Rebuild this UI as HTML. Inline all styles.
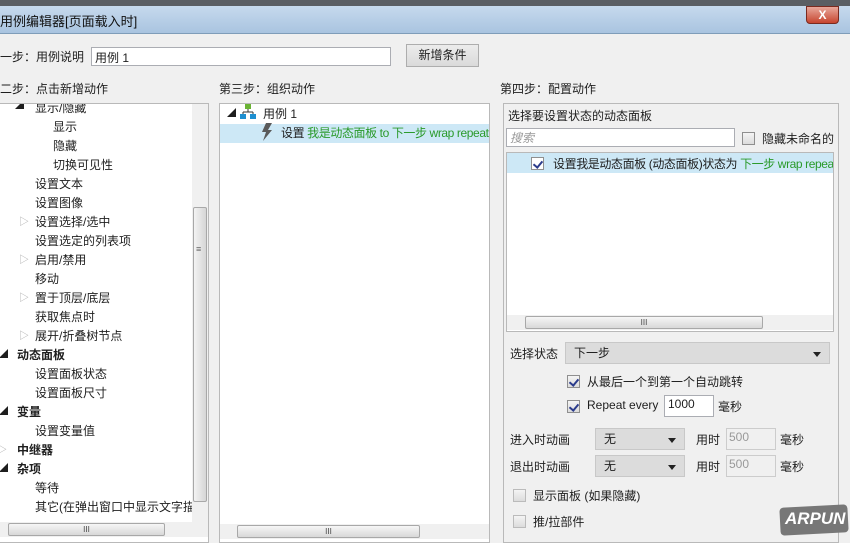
<!DOCTYPE html>
<html><head><meta charset="utf-8"><style>
*{box-sizing:border-box;margin:0;padding:0}
body{width:850px;height:537px;overflow:hidden;background:#f0f0f0;font-family:"Liberation Sans","Noto Sans CJK SC",sans-serif;font-size:12px;color:#1e1e1e;position:relative}
.a{position:absolute;white-space:nowrap}
.panel{position:absolute;background:#fff;border:1px solid #b9b9b9}
.panel .a{margin-top:-2px}
.g{color:#2a9a2a}
.n{letter-spacing:-0.4px}
.cb{position:absolute;width:13px;height:13px;border:1px solid #8f8f8f;background:linear-gradient(#f4f4f4,#dcdcdc)}
.ck::after{content:"";position:absolute;left:3px;top:1px;width:4px;height:7px;border:solid #2b3c8c;border-width:0 2px 2px 0;transform:rotate(40deg)}
.sel{position:absolute;background:#dcdcdc;border:1px solid #c8c8c8}
.sel::after{content:"";position:absolute;right:8px;top:9px;border:4px solid transparent;border-top:5px solid #222}
.inp{position:absolute;background:#fff;border:1px solid #abadb3}
.hs{position:absolute;background:#f0f0f0;height:15px}
.thumb{position:absolute;background:linear-gradient(#f6f6f6,#d8d8d8);border:1px solid #a8a8a8;border-radius:2px;height:13px;top:1px;text-align:center;font-size:8px;line-height:11px;color:#444}
</style></head><body>
<div class="a" style="left:0;top:0;width:850px;height:6px;background:#5a5e63"></div>
<div class="a" style="left:0;top:6px;width:850px;height:28px;background:linear-gradient(#c6d9ed,#a9c4e0);border-bottom:1px solid #7f9db9"></div>
<div class="a" style="left:0;top:11px;font-size:13px;color:#111">用例编辑器[页面载入时]</div>
<div class="a" style="left:806px;top:6px;width:33px;height:18px;background:linear-gradient(#e8a79a,#c7452f);border:1px solid #7a2a1f;border-radius:0 0 4px 4px;color:#fff;text-align:center;font-weight:bold;line-height:16px;font-size:12px">X</div>

<div class="a" style="left:0;top:48px">一步：用例说明</div>
<div class="inp" style="left:91px;top:47px;width:300px;height:19px"><span class="a" style="left:3px;top:1px">用例 1</span></div>
<div class="a" style="left:406px;top:44px;width:73px;height:23px;background:linear-gradient(#ececec,#dadada);border:1px solid #adadad;text-align:center;line-height:21px">新增条件</div>

<div class="a" style="left:0;top:80px">二步：点击新增动作</div>
<div class="a" style="left:219px;top:80px">第三步：组织动作</div>
<div class="a" style="left:500px;top:80px">第四步：配置动作</div>

<!-- left panel -->
<div class="panel" style="left:-1px;top:103px;width:210px;height:440px;overflow:hidden">
<div class="a" style="left:15px;top:-4px;font-size:9px">◢</div>
<div class="a" style="left:35px;top:-3px">显示/隐藏</div>
<div class="a" style="left:53px;top:16px">显示</div>
<div class="a" style="left:53px;top:35px">隐藏</div>
<div class="a" style="left:53px;top:54px">切换可见性</div>
<div class="a" style="left:35px;top:73px">设置文本</div>
<div class="a" style="left:35px;top:92px">设置图像</div>
<div class="a" style="left:19px;top:111px;color:#aaa;font-size:10px">▷</div><div class="a" style="left:35px;top:111px">设置选择/选中</div>
<div class="a" style="left:35px;top:130px">设置选定的列表项</div>
<div class="a" style="left:19px;top:149px;color:#aaa;font-size:10px">▷</div><div class="a" style="left:35px;top:149px">启用/禁用</div>
<div class="a" style="left:35px;top:168px">移动</div>
<div class="a" style="left:19px;top:187px;color:#aaa;font-size:10px">▷</div><div class="a" style="left:35px;top:187px">置于顶层/底层</div>
<div class="a" style="left:35px;top:206px">获取焦点时</div>
<div class="a" style="left:19px;top:225px;color:#aaa;font-size:10px">▷</div><div class="a" style="left:35px;top:225px">展开/折叠树节点</div>
<div class="a" style="left:-1px;top:245px;font-size:9px">◢</div><div class="a" style="left:17px;top:244px;font-weight:bold">动态面板</div>
<div class="a" style="left:35px;top:263px">设置面板状态</div>
<div class="a" style="left:35px;top:282px">设置面板尺寸</div>
<div class="a" style="left:-1px;top:302px;font-size:9px">◢</div><div class="a" style="left:17px;top:301px;font-weight:bold">变量</div>
<div class="a" style="left:35px;top:320px">设置变量值</div>
<div class="a" style="left:-3px;top:339px;color:#aaa;font-size:10px">▷</div><div class="a" style="left:17px;top:339px;font-weight:bold">中继器</div>
<div class="a" style="left:-1px;top:359px;font-size:9px">◢</div><div class="a" style="left:17px;top:358px;font-weight:bold">杂项</div>
<div class="a" style="left:35px;top:377px">等待</div>
<div class="a" style="left:35px;top:396px">其它(在弹出窗口中显示文字描述</div>
<div class="a" style="left:192px;top:0;width:17px;height:418px;background:#f0f0f0;margin-top:0"></div>
<div class="a" style="left:193px;top:103px;width:14px;height:295px;background:linear-gradient(90deg,#f3f3f3,#d6d6d6);border:1px solid #a8a8a8;border-radius:2px;margin-top:0"></div>
<div class="hs" style="left:0;top:418px;width:210px"><div class="thumb" style="left:8px;width:157px">III</div></div>
</div>
<div class="a" style="left:196px;top:244px;font-size:9px;color:#666">≡</div>

<!-- middle panel -->
<div class="panel" style="left:219px;top:103px;width:271px;height:440px;overflow:hidden">
<div class="a" style="left:7px;top:4px;font-size:9px">◢</div>
<svg class="a" style="left:20px;top:2px" width="16" height="15"><rect x="5" y="0" width="6" height="5" fill="#6ab334"/><path d="M8 5v3M3 8h10M3 8v2M13 8v2" stroke="#333" fill="none"/><rect x="0" y="10" width="6" height="5" fill="#1e8fd0"/><rect x="10" y="10" width="6" height="5" fill="#1e8fd0"/></svg>
<div class="a" style="left:43px;top:3px">用例 1</div>
<div class="a" style="left:0;top:20px;width:271px;height:19px;background:#cde8f6;margin-top:0"></div>
<svg class="a" style="left:40px;top:19px;margin-top:0" width="14" height="18"><path d="M6 0h6L8 7h4L3 18l3-9H2z" fill="#5a5a5a"/></svg>
<div class="a n" style="left:61px;top:22px">设置 <span class="g">我是动态面板 to 下一步 wrap repeat</span></div>
<div class="hs" style="left:0;top:420px;width:271px"><div class="thumb" style="left:17px;width:183px">III</div></div>
</div>

<!-- right panel -->
<div class="panel" style="left:503px;top:103px;width:336px;height:440px;background:#f0f0f0">
<div class="a" style="left:4px;top:5px">选择要设置状态的动态面板</div>
<div class="inp" style="left:2px;top:24px;width:229px;height:19px"><span class="a" style="left:3px;top:2px;color:#999;font-style:italic">搜索</span></div>
<div class="cb" style="left:238px;top:28px"></div>
<div class="a" style="left:258px;top:28px">隐藏未命名的</div>
<div class="a" style="left:2px;top:48px;width:328px;height:180px;background:#fff;border:1px solid #b9b9b9;overflow:hidden;margin-top:0">
<div class="a" style="left:0;top:0;width:328px;height:20px;background:#cde8f6;margin-top:0"></div>
<div class="cb ck" style="left:24px;top:4px;background:#fff"></div>
<div class="a n" style="left:46px;top:4px">设置我是动态面板 (动态面板)状态为 <span class="g">下一步 wrap repeat</span></div>
<div class="hs" style="left:0;top:162px;width:328px"><div class="thumb" style="left:18px;width:238px">III</div></div>
</div>
<div class="a" style="left:6px;top:243px">选择状态</div>
<div class="sel" style="left:61px;top:238px;width:265px;height:22px"><span class="a" style="left:8px;top:3px">下一步</span></div>
<div class="cb ck" style="left:63px;top:271px"></div>
<div class="a" style="left:83px;top:271px">从最后一个到第一个自动跳转</div>
<div class="cb ck" style="left:63px;top:296px"></div>
<div class="a" style="left:83px;top:296px">Repeat every</div>
<div class="inp" style="left:160px;top:291px;width:50px;height:22px"><span class="a" style="left:3px;top:3px">1000</span></div>
<div class="a" style="left:214px;top:296px">毫秒</div>
<div class="a" style="left:6px;top:329px">进入时动画</div>
<div class="sel" style="left:91px;top:324px;width:90px;height:22px"><span class="a" style="left:8px;top:3px">无</span></div>
<div class="a" style="left:192px;top:329px">用时</div>
<div class="inp" style="left:222px;top:324px;width:50px;height:22px;background:#f0f0f0;border-color:#ccc"><span class="a" style="left:2px;top:3px;color:#999">500</span></div>
<div class="a" style="left:276px;top:329px">毫秒</div>
<div class="a" style="left:6px;top:356px">退出时动画</div>
<div class="sel" style="left:91px;top:351px;width:90px;height:22px"><span class="a" style="left:8px;top:3px">无</span></div>
<div class="a" style="left:192px;top:356px">用时</div>
<div class="inp" style="left:222px;top:351px;width:50px;height:22px;background:#f0f0f0;border-color:#ccc"><span class="a" style="left:2px;top:3px;color:#999">500</span></div>
<div class="a" style="left:276px;top:356px">毫秒</div>
<div class="cb" style="left:9px;top:385px;border-color:#bbb"></div>
<div class="a" style="left:29px;top:385px">显示面板 (如果隐藏)</div>
<div class="cb" style="left:9px;top:411px;border-color:#bbb"></div>
<div class="a" style="left:29px;top:411px">推/拉部件</div>
</div>
<div class="a" style="left:780px;top:506px;width:68px;height:28px;background:#777;transform:rotate(-3deg);border-radius:4px"></div>
<div class="a" style="left:785px;top:509px;font-size:17px;font-weight:bold;font-style:italic;color:#fff">ARPUN</div>
</body></html>
